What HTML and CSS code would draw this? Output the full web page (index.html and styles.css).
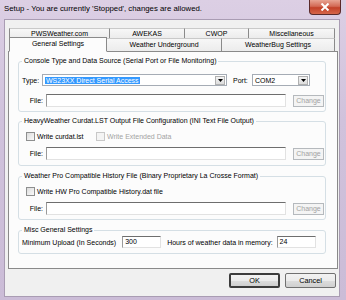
FILE: index.html
```html
<!DOCTYPE html>
<html>
<head>
<meta charset="utf-8">
<link rel="stylesheet" href="styles.css">
</head>
<body>
<div class="window">
  <div class="titlebar">
    <span class="title">Setup - You are currently 'Stopped', changes are allowed.</span>
    <span class="close"><svg width="10" height="8" viewBox="0 0 10 8"><path d="M1.5 0.5 L8.5 7.5 M8.5 0.5 L1.5 7.5" stroke="#fff" stroke-width="2"/></svg></span>
  </div>
  <div class="client">
    <div class="tabs">
      <div class="tabrow back">
        <div class="tab w-pws">PWSWeather.com</div>
        <div class="tab w-awe">AWEKAS</div>
        <div class="tab w-cwop">CWOP</div>
        <div class="tab w-misc">Miscellaneous</div>
      </div>
      <div class="tabrow front">
        <div class="tab sel w-gen">General Settings</div>
        <div class="tab w-wu">Weather Underground</div>
        <div class="tab w-wb">WeatherBug Settings</div>
      </div>
    </div>
    <div class="panel">
      <fieldset class="group g1">
        <legend>Console Type and Data Source (Serial Port or File Monitoring)</legend>
        <div class="row type-row">
          <span class="lbl lbl-type">Type:</span>
          <div class="combo combo-type"><span class="combo-text"><span class="hl">WS23XX Direct Serial Access</span></span><span class="drop"><svg width="5" height="3" viewBox="0 0 5 3"><path d="M0 0 H5 L2.5 3 Z" fill="#000"/></svg></span></div>
          <span class="lbl lbl-port">Port:</span>
          <div class="combo combo-port"><span class="combo-text">COM2</span><span class="drop"><svg width="5" height="3" viewBox="0 0 5 3"><path d="M0 0 H5 L2.5 3 Z" fill="#000"/></svg></span></div>
        </div>
        <div class="row file-row">
          <span class="lbl lbl-file">File:</span>
          <div class="field field-file"></div>
          <div class="btn-change">Change</div>
        </div>
      </fieldset>
      <fieldset class="group g2">
        <legend>HeavyWeather Curdat.LST Output File Configuration (INI Text File Output)</legend>
        <div class="row check-row">
          <span class="check"></span><span class="ctext ctext-1">Write curdat.lst</span>
          <span class="check disabled"></span><span class="ctext disabled-text">Write Extended Data</span>
        </div>
        <div class="row file-row">
          <span class="lbl lbl-file">File:</span>
          <div class="field field-file"></div>
          <div class="btn-change">Change</div>
        </div>
      </fieldset>
      <fieldset class="group g3">
        <legend>Weather Pro Compatible History File (Binary Proprietary La Crosse Format)</legend>
        <div class="row check-row">
          <span class="check"></span><span class="ctext">Write HW Pro Compatible History.dat file</span>
        </div>
        <div class="row file-row">
          <span class="lbl lbl-file">File:</span>
          <div class="field field-file"></div>
          <div class="btn-change">Change</div>
        </div>
      </fieldset>
      <fieldset class="group g4">
        <legend>Misc General Settings</legend>
        <div class="row misc-row">
          <span class="lbl lbl-min">Minimum Upload (In Seconds)</span>
          <div class="field field-num field-min">300</div>
          <span class="lbl lbl-hours">Hours of weather data in memory:</span>
          <div class="field field-num field-hours">24</div>
        </div>
      </fieldset>
    </div>
    <div class="buttons">
      <div class="btn btn-ok">OK</div>
      <div class="btn btn-cancel">Cancel</div>
    </div>
  </div>
</div>
</body>
</html>
```

FILE: styles.css
```css
html, body {
  margin: 0;
  padding: 0;
}
body {
  width: 346px;
  height: 300px;
  overflow: hidden;
  background: #3a3440;
  font-family: "Liberation Sans", Arial, sans-serif;
  font-size: 7px;
  color: #000;
}
.window {
  width: 346px;
  height: 300px;
  box-sizing: border-box;
  padding: 0 6px 3px 4px;
  background: linear-gradient(to bottom, #dccfe4 0%, #d0c2dc 40%, #cbbcd7 100%);
  display: flex;
  flex-direction: column;
}
.titlebar {
  height: 19px;
  display: flex;
  align-items: flex-start;
  position: relative;
}
.title {
  font-size: 7.8px;
  line-height: 9px;
  margin-top: 4px;
  color: #000;
  white-space: nowrap;
}
.close {
  margin-left: auto;
  margin-right: -1px;
  width: 32px;
  height: 15px;
  box-sizing: border-box;
  border: 1px solid #5a2a2a;
  border-top: none;
  border-radius: 0 0 4px 4px;
  background: linear-gradient(to bottom, #e8a493 0%, #d36a55 45%, #c24128 55%, #d6664a 100%);
  display: flex;
  align-items: center;
  justify-content: center;
}
.client {
  flex: 1;
  background: #f0f0f0;
  border: 1px solid #a99cb3;
  box-sizing: border-box;
  display: flex;
  flex-direction: column;
}
.tabs {
  margin-top: 8px;
  margin-left: 4px;
  width: 326px;
}
.tabrow {
  display: flex;
  height: 10px;
}
.tabrow.front {
  height: 14px;
}
.tab {
  box-sizing: border-box;
  text-align: center;
  white-space: nowrap;
  line-height: 9px;
  border-right: 1px solid #8a8a8a;
  background: linear-gradient(to bottom, #f7f7f7, #ececec);
}
.back .tab {
  border-top: 1px solid #c9c9c9;
}
.back .tab:first-child {
  border-left: 1px solid #8a8a8a;
}
.front .tab {
  border-top: 1px solid #c9c9c9;
  line-height: 12px;
  border-bottom: 1px solid #8a8a8a;
}
.front .tab.sel {
  background: #fcfcfc;
  border-left: 1px solid #8a8a8a;
  border-bottom: 1px solid #fcfcfc;
  border-top: 1px solid #8a8a8a;
  height: 15px;
  margin-top: -1px;
  position: relative;
  z-index: 2;
}
.w-pws { width: 101px; }
.w-awe { width: 75px; }
.w-cwop { width: 64px; }
.w-misc { width: 86px; }
.w-gen { width: 98px; }
.w-wu { width: 115px; }
.w-wb { width: 113px; }

.panel {
  margin-left: 3px;
  margin-top: -1px;
  width: 330px;
  height: 218px;
  box-sizing: border-box;
  border: 1px solid #8a8a8a;
  background: #fcfcfc;
  padding: 5px 11px 0 9px;
  display: flex;
  flex-direction: column;
}
.group {
  margin: 0;
  padding: 0 0 0 3px;
  border: 1px solid #d5dfe5;
  border-radius: 3px;
  min-width: 0;
  display: flex;
  flex-direction: column;
}
.group legend {
  padding: 0 2px;
  margin-left: 0;
  line-height: 8px;
  font-size: 7px;
  white-space: nowrap;
}
.row {
  display: flex;
  align-items: center;
}
.g1 { padding-top: 9px; padding-bottom: 4px; }
.g1 .type-row { height: 12px; }
.g1 .file-row { margin-top: 8px; }
.g2 { margin-top: 5px; padding-top: 6px; padding-bottom: 5px; }
.g3 { margin-top: 6px; padding-top: 6px; padding-bottom: 4px; }
.g4 { margin-top: 6px; padding-top: 2px; padding-bottom: 5px; }
.check-row { height: 10px; }
.file-row { height: 13px; margin-top: 6px; }
.misc-row { height: 12px; }

.lbl { white-space: nowrap; }
.lbl-type { width: 20px; }
.combo {
  height: 12px;
  box-sizing: border-box;
  border: 1px solid #a5acb5;
  background: #fff;
  display: flex;
  align-items: center;
  padding: 1px;
}
.combo-type { width: 185px; }
.combo-text {
  flex: 1;
  line-height: 9px;
  white-space: nowrap;
  overflow: hidden;
  padding-left: 1px;
}
.hl {
  background: #3399ff;
  color: #fff;
  padding: 0 1px;
}
.drop {
  width: 10px;
  height: 9px;
  box-sizing: border-box;
  border: 1px solid #b0b0b0;
  background: linear-gradient(to bottom, #f4f4f4, #dcdcdc);
  display: flex;
  align-items: center;
  justify-content: center;
}
.lbl-port { margin-left: 6px; width: 19px; }
.combo-port { width: 58px; }
.lbl-file { width: 21px; text-align: right; }
.field {
  height: 13px;
  box-sizing: border-box;
  background: #fff;
  border-top: 1px solid #6e6e6e;
  border-left: 1px solid #9a9a9a;
  border-right: 1px solid #e2e2e2;
  border-bottom: 1px solid #e2e2e2;
}
.field-file { width: 240px; margin-left: 3px; }
.btn-change {
  margin-left: 7px;
  width: 31px;
  height: 12px;
  box-sizing: border-box;
  border: 1px solid #b5b9bd;
  background: #f4f4f4;
  color: #a3a3a3;
  text-align: center;
  line-height: 10px;
}
.check {
  width: 9px;
  height: 9px;
  box-sizing: border-box;
  border: 1px solid #8e8f8f;
  background: linear-gradient(135deg, #dcdcdc, #fafafa);
  margin-left: 4px;
  margin-right: 2px;
}
.check.disabled {
  border-color: #c8c8c8;
  background: #f4f4f4;
  margin-left: 0;
}
.ctext-1 { width: 59px; }
.disabled-text { color: #a3a3a3; }
.field-num {
  height: 12px;
  line-height: 10px;
  padding-left: 2px;
}
.field-min { width: 39px; margin-left: 6px; }
.lbl-hours { margin-left: 6px; }
.field-hours { width: 39px; margin-left: 4px; }

.buttons {
  display: flex;
  justify-content: flex-end;
  margin-top: 4px;
  margin-right: 3px;
  gap: 5px;
}
.btn {
  width: 51px;
  height: 15px;
  box-sizing: border-box;
  border: 1px solid #707070;
  border-radius: 2px;
  background: linear-gradient(to bottom, #f2f2f2 0%, #ebebeb 50%, #dddddd 51%, #cfcfcf 100%);
  text-align: center;
  line-height: 13px;
  font-size: 7.3px;
}
.btn-ok {
  border: 2px solid #3c3c3c;
  line-height: 11px;
}
```
